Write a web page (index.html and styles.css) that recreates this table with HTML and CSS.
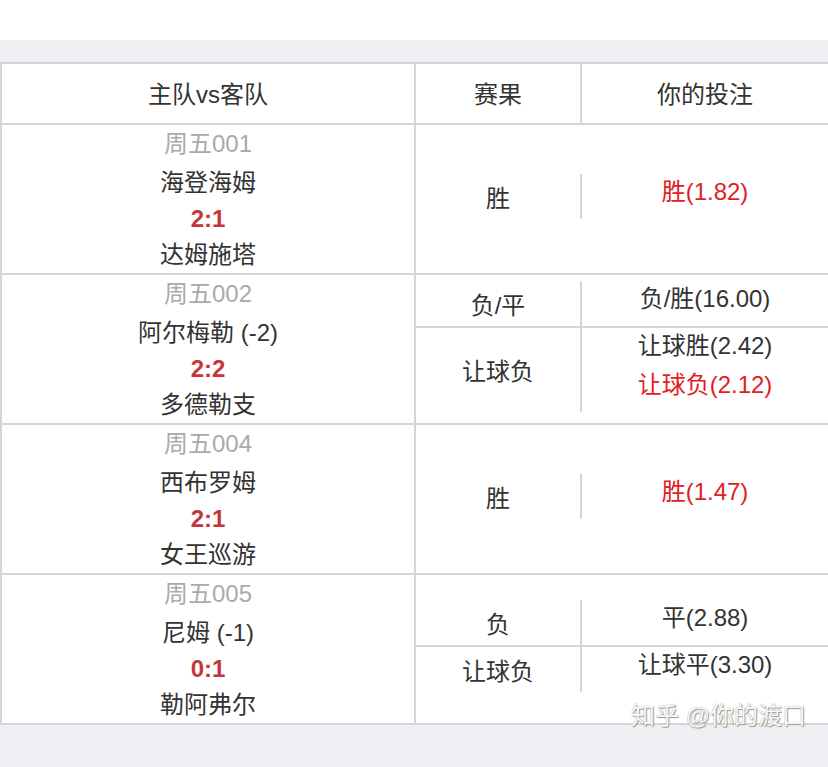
FILE: index.html
```html
<!DOCTYPE html>
<html lang="zh-CN">
<head>
<meta charset="utf-8">
<title>投注记录</title>
<link rel="stylesheet" href="styles.css">
</head>
<body>
<div class="top"></div>
<div class="band">
  <div class="sheet">
    <div class="head">
      <div class="hcell">主队vs客队</div>
      <div class="hcell">赛果</div>
      <div class="hcell last">你的投注</div>
    </div>

    <div class="match">
      <div class="teams">
        <div class="no">周五001</div>
        <div class="team">海登海姆</div>
        <div class="score">2:1</div>
        <div class="team">达姆施塔</div>
      </div>
      <div class="picks">
        <div class="pick">
          <div class="res">胜</div>
          <div class="bet"><div class="hit">胜(1.82)</div></div>
        </div>
      </div>
    </div>

    <div class="match">
      <div class="teams">
        <div class="no">周五002</div>
        <div class="team">阿尔梅勒 (-2)</div>
        <div class="score">2:2</div>
        <div class="team">多德勒支</div>
      </div>
      <div class="picks">
        <div class="pick">
          <div class="res">负/平</div>
          <div class="bet"><div>负/胜(16.00)</div></div>
        </div>
        <div class="pick">
          <div class="res">让球负</div>
          <div class="bet"><div>让球胜(2.42)</div><div class="hit">让球负(2.12)</div></div>
        </div>
      </div>
    </div>

    <div class="match">
      <div class="teams">
        <div class="no">周五004</div>
        <div class="team">西布罗姆</div>
        <div class="score">2:1</div>
        <div class="team">女王巡游</div>
      </div>
      <div class="picks">
        <div class="pick">
          <div class="res">胜</div>
          <div class="bet"><div class="hit">胜(1.47)</div></div>
        </div>
      </div>
    </div>

    <div class="match">
      <div class="teams">
        <div class="no">周五005</div>
        <div class="team">尼姆 (-1)</div>
        <div class="score">0:1</div>
        <div class="team">勒阿弗尔</div>
      </div>
      <div class="picks">
        <div class="pick">
          <div class="res">负</div>
          <div class="bet"><div>平(2.88)</div></div>
        </div>
        <div class="pick">
          <div class="res">让球负</div>
          <div class="bet"><div>让球平(3.30)</div></div>
        </div>
      </div>
    </div>
  </div>
  <div class="mark">知乎 @你的渡口</div>
</div>
</body>
</html>
```

FILE: styles.css
```css
* { box-sizing: border-box; }

html, body {
  margin: 0;
  padding: 0;
}

body {
  width: 828px;
  height: 767px;
  overflow: hidden;
  background: #efeff4;
  font-family: "Liberation Sans", "Noto Sans CJK SC", sans-serif;
  font-size: 24px;
  color: #333;
}

.top {
  height: 40px;
  background: #fff;
}

.band {
  position: relative;
  padding-top: 22px;
  height: 727px;
  background: #efeff4;
}

.sheet {
  background: #fff;
  border-top: 2px solid #d5d5d5;
  border-left: 2px solid #d5d5d5;
}

.head {
  display: grid;
  grid-template-columns: 414px 166px 1fr;
  border-bottom: 2px solid #d5d5d5;
}

.hcell {
  height: 59px;
  display: flex;
  align-items: center;
  justify-content: center;
  border-right: 2px solid #d5d5d5;
  padding-bottom: 2px;
}

.hcell.last { border-right: none; }

.match {
  display: grid;
  grid-template-columns: 414px 1fr;
  height: 150px;
  border-bottom: 2px solid #d5d5d5;
}

.teams {
  border-right: 2px solid #d5d5d5;
  display: flex;
  flex-direction: column;
  justify-content: center;
  align-items: center;
  line-height: 36px;
}

.no {
  color: #aaa;
  margin-bottom: 3px;
}

.score {
  color: #c4363a;
  font-weight: bold;
}

.picks {
  display: flex;
  flex-direction: column;
  justify-content: center;
  padding-bottom: 6px;
}

.pick {
  display: grid;
  grid-template-columns: 166px 1fr;
}

.pick + .pick {
  border-top: 2px solid #d5d5d5;
}

.res {
  border-right: 2px solid #d5d5d5;
  display: flex;
  align-items: center;
  justify-content: center;
  min-height: 45px;
}

.bet {
  display: flex;
  flex-direction: column;
  align-items: center;
  line-height: 39px;
  padding-bottom: 8px;
  margin-top: -2px;
}

.hit {
  color: #e0201e;
}

.mark {
  position: absolute;
  right: 22px;
  top: 656px;
  color: #fafafa;
  text-shadow: 0 0 1px #888, 1px 1px 1px #999;
}
```
